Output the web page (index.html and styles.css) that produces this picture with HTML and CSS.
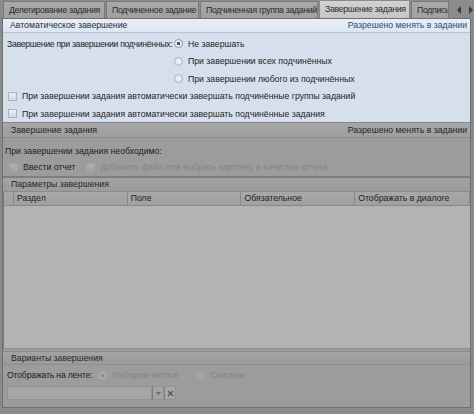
FILE: index.html
```html
<!DOCTYPE html>
<html>
<head>
<meta charset="utf-8">
<link rel="stylesheet" href="styles.css">
</head>
<body>
<div class="app">
  <div class="tabs">
    <div class="tab">Делегирование задания</div>
    <div class="tab">Подчиненное задание</div>
    <div class="tab">Подчиненная группа заданий</div>
    <div class="tab active">Завершение задания</div>
    <div class="tab cut">Подпись</div>
    <div class="arrows">
      <svg width="6" height="8" viewBox="0 0 6 8"><path d="M5 0 L1 4 L5 8 Z" fill="#3a3a3a"/></svg>
      <svg width="6" height="8" viewBox="0 0 6 8"><path d="M1 0 L5 4 L1 8 Z" fill="#3a3a3a"/></svg>
    </div>
  </div>
  <div class="frame">
    <div class="blue">
      <div class="bhead"><span>Автоматическое завершение</span><span class="link">Разрешено менять в задании</span></div>
      <div class="bbody">
        <div class="row"><span class="lbl">Завершение при завершении подчинённых:</span><span class="radio on"></span><span>Не завершать</span></div>
        <div class="row indent"><span class="radio"></span><span>При завершении всех подчинённых</span></div>
        <div class="row indent"><span class="radio"></span><span>При завершении любого из подчинённых</span></div>
        <div class="row chk"><span class="box"></span><span>При завершении задания автоматически завершать подчинённые группы заданий</span></div>
        <div class="row chk"><span class="box"></span><span>При завершении задания автоматически завершать подчинённые задания</span></div>
      </div>
    </div>
    <div class="ghead"><span>Завершение задания</span><span>Разрешено менять в задании</span></div>
    <div class="gbody">
      <div class="line1">При завершении задания необходимо:</div>
      <div class="line2"><span class="box g"></span><span>Ввести отчет</span><span class="box g dis"></span><span class="distext">Добавить файл или выбрать карточку в качестве отчета</span></div>
    </div>
    <div class="ghead2">Параметры завершения</div>
    <div class="table">
      <div class="thead">
        <div class="rh"></div>
        <div class="th">Раздел</div>
        <div class="th">Поле</div>
        <div class="th">Обязательное</div>
        <div class="th">Отображать в диалоге</div>
      </div>
      <div class="tbody"></div>
    </div>
    <div class="ghead3">Варианты завершения</div>
    <div class="vbody">
      <div class="vrow"><span class="vl">Отображать на ленте:</span><span class="radio g dis on"></span><span class="distext">Набором кнопок</span><span class="radio g dis sp"></span><span class="distext">Списком</span></div>
      <div class="combo">
        <div class="cfield"></div>
        <div class="cbtn"><svg width="5" height="3" viewBox="0 0 5 3"><path d="M0 0 H5 L2.5 3 Z" fill="#6a6a6a"/></svg></div>
        <div class="cbtn x"><svg width="7" height="7" viewBox="0 0 7 7"><path d="M1 1 L6 6 M6 1 L1 6" stroke="#5a5a5a" stroke-width="1.6"/></svg></div>
      </div>
    </div>
  </div>
</div>
</body>
</html>
```
FILE: styles.css
```css
* { box-sizing: border-box; }
html, body { margin: 0; padding: 0; }
body {
  width: 474px; height: 414px; overflow: hidden;
  background: #8b8b8b;
  font-family: "Liberation Sans", Arial, sans-serif;
  font-size: 8.7px;
  color: #1d1d1d;
}
.app { width: 474px; height: 414px; display: flex; flex-direction: column; }
.tabs { height: 18px; display: flex; align-items: flex-end; padding-left: 3px; }
.tab {
  height: 17px; line-height: 16px;
  background: linear-gradient(#a9a9a9, #a0a0a0);
  border: 1px solid #7a7a7a; border-bottom: none;
  padding: 0 0 0 5px; color: #2a2a2a; white-space: nowrap;
  margin-right: 1px; overflow: hidden;
  letter-spacing: -0.3px;
}
.tab:nth-child(1) { width: 102px; }
.tab:nth-child(2) { width: 93px; }
.tab:nth-child(3) { width: 118px; }
.tab.active { width: 91px; height: 18px; line-height: 17px; background: linear-gradient(#d2d2d2, #c6c6c6); border-color: #8a8a8a; }
.tab.cut { width: 38px; }
.arrows { display: flex; gap: 6px; align-items: center; height: 17px; margin-left: 6px; }
.frame {
  flex: 1; margin: 0 3px 6px 2px;
  border: 1px solid #6f6f6f;
  display: flex; flex-direction: column;
  background: #9c9c9c;
}
.blue { background: #d6e0ec; border-bottom: 1px solid #7c8590; }
.bhead {
  height: 14px; line-height: 13px; padding: 0 3px 0 7px;
  display: flex; justify-content: space-between;
  background: linear-gradient(#e7eef7, #dde6f1);
  border-bottom: 1px solid #b9c5d3;
  color: #1e2b3c;
}
.bhead .link { color: #2b4a7c; }
.bbody { padding: 2px 0 0 4px; height: 89px; }
.row { height: 17.5px; display: flex; align-items: center; white-space: nowrap; }
.lbl { width: 167px; letter-spacing: -0.32px; }
.indent { padding-left: 167px; }
.radio {
  width: 9px; height: 9px; border-radius: 50%;
  border: 1px solid #aab4c0; background: radial-gradient(#f4f7fa, #d4dce6);
  margin-right: 5px; flex: none;
}
.radio.on { background: radial-gradient(circle, #4d5866 0 1.5px, #f4f7fa 2px, #dbe2ea 100%); border-color: #8b96a3; }
.box {
  width: 9px; height: 9px; border: 1px solid #aab4c0;
  background: linear-gradient(#e9eef4, #d2dae4);
  margin: 0 5px 0 1px; flex: none;
}
.ghead {
  height: 15px; line-height: 14px; padding: 0 3px 0 8px;
  display: flex; justify-content: space-between;
  background: linear-gradient(#a6a6a6, #9e9e9e);
  border-bottom: 1px solid #8c8c8c;
  color: #262626;
}
.gbody { height: 40px; padding: 6px 0 0 2px; border-bottom: 2px solid #7e7e7e; }
.line1 { height: 14px; line-height: 14px; }
.line2 { height: 18px; display: flex; align-items: center; padding-left: 3px; white-space: nowrap; }
.box.g { border-color: #a2a2a2; background: linear-gradient(#adadad, #a3a3a3); }
.box.dis { margin-left: 11px; }
.distext { color: #848484; }
.ghead2 {
  height: 14px; line-height: 13px; padding-left: 8px;
  background: linear-gradient(#a3a3a3, #9b9b9b);
  border-bottom: 1px solid #8a8a8a; color: #262626;
}
.table { height: 157px; display: flex; flex-direction: column; border-left: 1px solid #7a7a7a; border-bottom: 1px solid #8e8e8e; }
.thead { height: 14px; display: flex; background: linear-gradient(#a8a8a8, #a0a0a0); border-bottom: 1px solid #888; }
.rh { width: 10px; border-right: 1px solid #8a8a8a; }
.th { width: 114px; border-right: 1px solid #8a8a8a; line-height: 13px; padding-left: 3px; color: #222; }
.th:last-child { width: 115px; }
.tbody { flex: 1; background: #b3b3b3; }
.ghead3 {
  height: 14px; line-height: 13px; padding-left: 8px; margin-top: 2px;
  background: linear-gradient(#a3a3a3, #9b9b9b);
  border-top: 1px solid #8a8a8a;
  border-bottom: 1px solid #8e8e8e; color: #262626;
}
.vbody { flex: 1; padding: 1px 0 0 4px; }
.vrow { height: 18px; display: flex; align-items: center; white-space: nowrap; }
.vl { margin-right: 6px; letter-spacing: -0.2px; }
.radio.g { border-color: #a6a6a6; background: #a4a4a4; }
.radio.g.on { background: radial-gradient(circle, #8e8e8e 0 1.5px, #a8a8a8 2px); }
.radio.sp { margin-left: 18px; }
.combo { display: flex; height: 14px; margin-top: 2px; }
.cfield { width: 145px; background: #a6a6a6; border: 1px solid #939393; }
.cbtn { width: 12px; display: flex; align-items: center; justify-content: center; background: #a3a3a3; border: 1px solid #939393; border-left: 1px solid #7c7c7c; }
.cbtn.x { background: #a8a8a8; }
```
